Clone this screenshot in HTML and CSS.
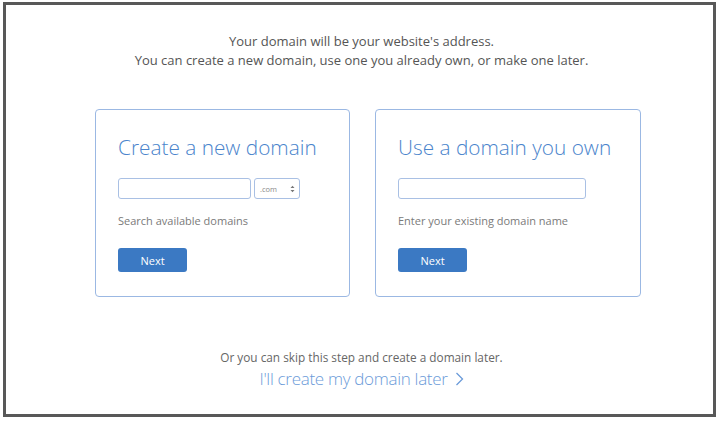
FILE: index.html
```html
<!DOCTYPE html>
<html>
<head>
<meta charset="utf-8">
<link rel="stylesheet" href="styles.css">
</head>
<body>
<div class="frame">
  <div class="intro">
    <p>Your domain will be your website's address.</p>
    <p>You can create a new domain, use one you already own, or make one later.</p>
  </div>
  <div class="cards">
    <div class="card">
      <h2 class="card-title">Create a new domain</h2>
      <div class="field-row">
        <div class="input input-short"></div>
        <div class="select"><span class="select-text">.com</span>
          <svg class="arrows" width="5" height="8" viewBox="0 0 5 8"><path d="M0.5 3 L2.5 0.8 L4.5 3 Z M0.5 5 L2.5 7.2 L4.5 5 Z" fill="#777"/></svg>
        </div>
      </div>
      <p class="help">Search available domains</p>
      <button class="btn">Next</button>
    </div>
    <div class="card card-right">
      <h2 class="card-title">Use a domain you own</h2>
      <div class="field-row">
        <div class="input input-long"></div>
      </div>
      <p class="help">Enter your existing domain name</p>
      <button class="btn">Next</button>
    </div>
  </div>
  <div class="later">
    <p class="later-text">Or you can skip this step and create a domain later.</p>
    <a class="later-link">I'll create my domain later
      <svg class="chev" width="9" height="14" viewBox="0 0 9 14"><path d="M1.5 1 L7.5 7 L1.5 13" fill="none" stroke="#6b9bd9" stroke-width="1.3"/></svg>
    </a>
  </div>
</div>
</body>
</html>
```
FILE: styles.css
```css
html, body {
  margin: 0;
  padding: 0;
  background: #ffffff;
}
body {
  font-family: "Open Sans", "DejaVu Sans", sans-serif;
  width: 720px;
  height: 422px;
  overflow: hidden;
}
.frame {
  margin: 2px 0 0 3px;
  width: 707px;
  height: 409px;
  border: 3px solid #585858;
  background: #fff;
  box-sizing: content-box;
}
.intro {
  padding-top: 27px;
  text-align: center;
  color: #555;
  font-size: 13px;
  line-height: 19px;
  padding-left: 4px;
}
.intro p { margin: 0; }
.cards {
  display: flex;
  gap: 25px;
  margin-top: 39px;
  padding-left: 89px;
}
.card {
  border: 1px solid #9bb8e3;
  border-radius: 4px;
  padding: 0 22px;
  box-sizing: border-box;
  width: 255px;
  height: 188px;
}
.card-right {
  width: 266px;
}
.card-title {
  margin: 22px 0 0 0;
  font-weight: 300;
  font-size: 20.8px;
  line-height: 30px;
  color: #4a84cc;
  white-space: nowrap;
}
.field-row {
  display: flex;
  gap: 3px;
  margin-top: 16px;
}
.input {
  height: 21px;
  border: 1.5px solid #a9c0e4;
  border-radius: 3px;
  box-sizing: border-box;
}
.input-short { width: 133px; }
.input-long { width: 188px; }
.select {
  width: 46px;
  height: 21px;
  border: 1.5px solid #a9c0e4;
  border-radius: 3px;
  box-sizing: border-box;
  display: flex;
  align-items: center;
  justify-content: space-between;
  padding: 0 4px 0 5px;
}
.select-text {
  font-size: 7.5px;
  color: #888;
}
.arrows { display: block; }
.help {
  margin: 14px 0 0 0;
  font-size: 11px;
  line-height: 16px;
  color: #7a7a7a;
}
.btn {
  display: block;
  margin-top: 19px;
  width: 69px;
  height: 24px;
  border: none;
  border-radius: 3px;
  background: #3b79c3;
  color: #fff;
  font-family: "Open Sans", "DejaVu Sans", sans-serif;
  font-size: 11px;
  padding: 0;
}
.later {
  margin-top: 52px;
  text-align: center;
  padding-left: 4px;
}
.later-text {
  margin: 0;
  font-size: 11.8px;
  line-height: 17px;
  color: #666;
}
.later-link {
  display: inline-flex;
  align-items: center;
  gap: 7px;
  margin-top: 1px;
  font-size: 17px;
  font-weight: 300;
  line-height: 24px;
  color: #6b9bd9;
  letter-spacing: -0.3px;
}
.chev { display: block; }
```
